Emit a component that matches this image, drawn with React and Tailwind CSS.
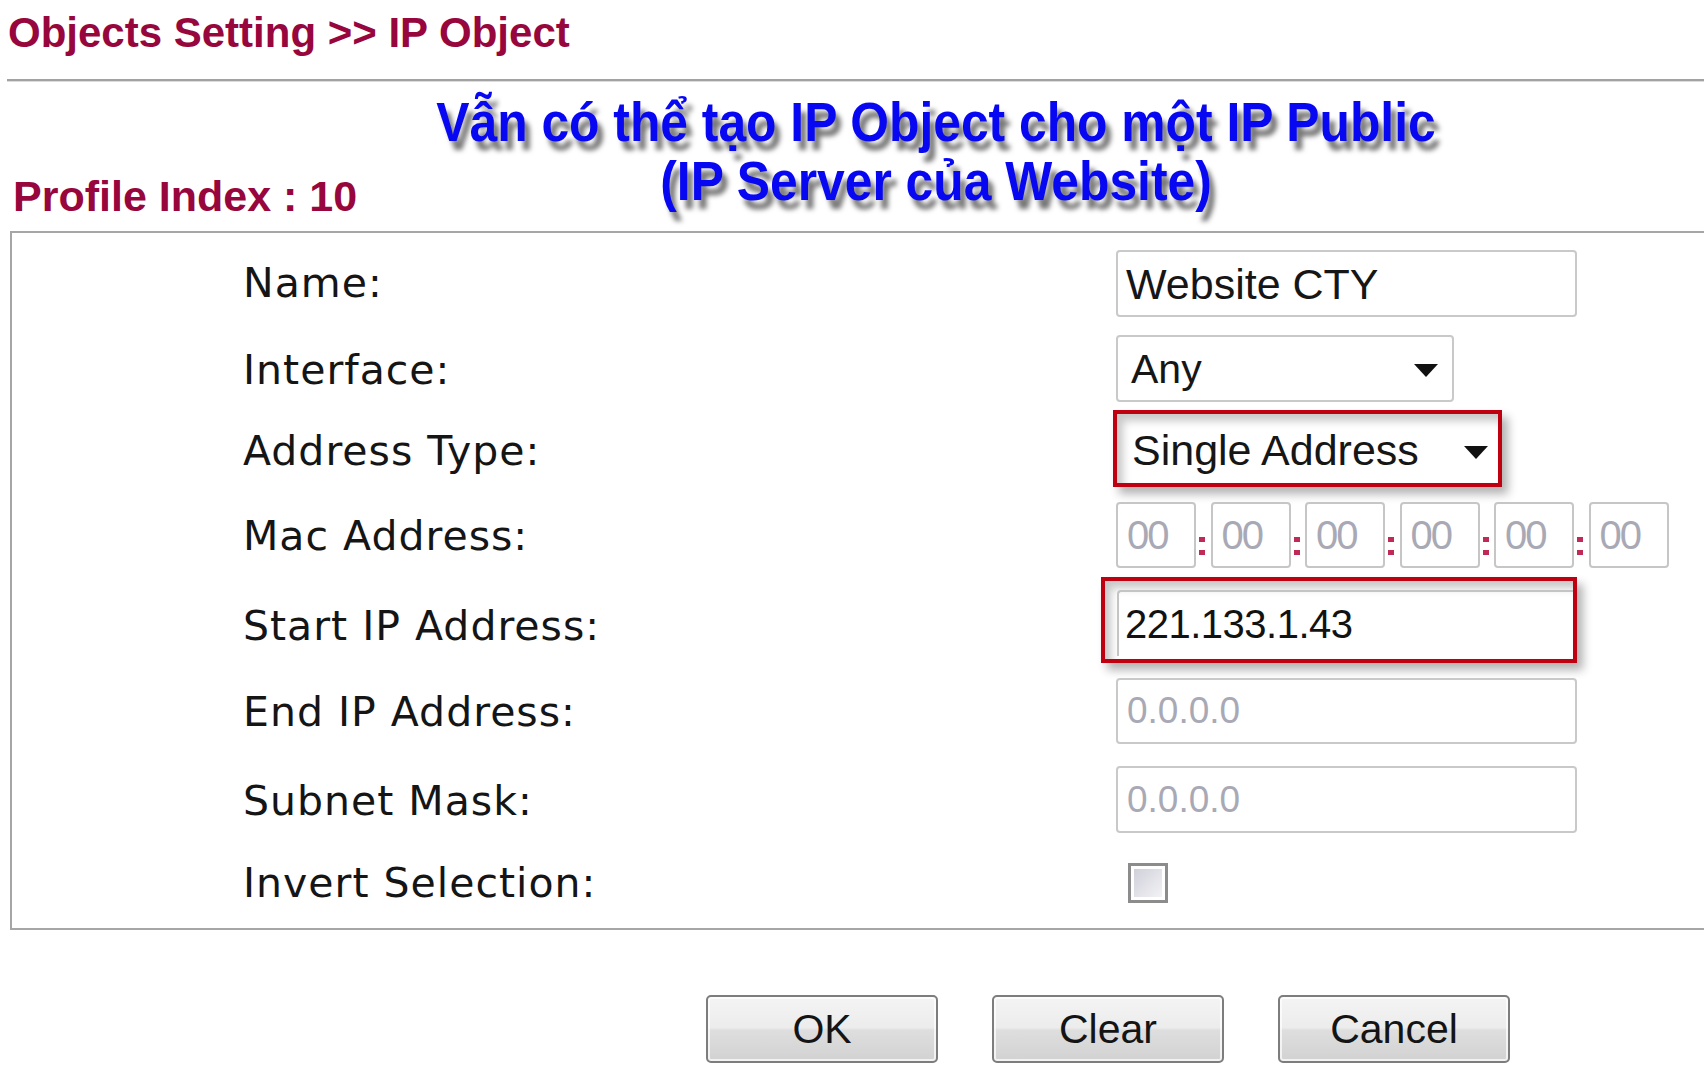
import React from "react";

const SANS = { fontFamily: '"Liberation Sans", Arial, sans-serif' };
const LABEL = { fontFamily: '"DejaVu Sans", Verdana, sans-serif' };

function Arrow() {
  return (
    <svg width="24" height="13" viewBox="0 0 24 13" className="block">
      <polygon points="0,0 24,0 12,13" fill="#111" />
    </svg>
  );
}

function Label({ children, pt = "pt-0" }) {
  return (
    <div
      className={`w-[1104px] pl-[231px] text-[41px] leading-[41px] tracking-[1px] text-[#151515] ${pt}`}
      style={LABEL}
    >
      {children}
    </div>
  );
}

function TextBox({ value, muted, w = "w-[461px]", h = "h-[67px]", pl = "pl-[9px]", size = "text-[40px]" }) {
  return (
    <div
      className={`${w} ${h} ${pl} ${size} flex items-center border-2 border-[#c9c9c9] rounded-[4px] bg-white leading-[40px] ${
        muted ? "text-[#a9a9b6]" : "text-[#161616]"
      }`}
      style={SANS}
    >
      {value}
    </div>
  );
}

function MacBox() {
  return (
    <div
      className="w-[80px] h-[66px] pl-[9px] flex items-center border-2 border-[#c6c6c6] rounded-[4px] bg-white text-[40px] leading-[40px] text-[#a9a9b6] tracking-[-2px]"
      style={SANS}
    >
      00
    </div>
  );
}

function Colon() {
  return (
    <div className="w-[14.5px] h-[66px] flex flex-col items-start pl-[3px] pt-[35px] gap-[8px]">
      <div className="w-[6px] h-[5px] bg-[#bf2a57]" />
      <div className="w-[6px] h-[5px] bg-[#bf2a57]" />
    </div>
  );
}

function Button({ children }) {
  return (
    <div
      className="w-[232px] h-[68px] flex items-center justify-center border-2 border-[#7d7d7d] rounded-[5px] bg-[linear-gradient(#f4f4f4,#ececec_48%,#dedede_52%,#d2d2d2)] text-[41px] leading-[41px] text-[#141414] shadow-[inset_0_0_0_2px_rgba(255,255,255,0.7)]"
      style={SANS}
    >
      {children}
    </div>
  );
}

export default function App() {
  return (
    <div className="w-[1704px] h-[1080px] bg-white overflow-hidden">
      {/* Title */}
      <div
        className="h-[79px] pt-[12px] pl-[8px] text-[42px] leading-[41px] font-bold text-[#97063c]"
        style={SANS}
      >
        Objects Setting &gt;&gt; IP Object
      </div>
      <div className="ml-[7px] h-[2px] bg-[#a2a2a2] border-b border-[#dcdcdc] box-content" />

      {/* Header area */}
      <div className="relative h-[149px]">
        <div
          className="pt-[93px] pl-[13px] text-[43px] leading-[42px] font-bold text-[#97063c]"
          style={SANS}
        >
          Profile Index : 10
        </div>
        <div
          className="absolute top-[11px] left-[336px] w-[1200px] text-center text-[55px] leading-[59px] font-bold text-[#0707f2] scale-x-[0.905] [text-shadow:6px_9px_6px_rgba(0,0,0,0.55)]"
          style={SANS}
        >
          <div>Vẫn có thể tạo IP Object cho một IP Public</div>
          <div>(IP Server của Website)</div>
        </div>
      </div>

      {/* Form box */}
      <div className="ml-[10px] border-t-2 border-l-2 border-b-2 border-[#a6a6a6] pt-[17px] pb-[25px] flex flex-col">
        {/* Name */}
        <div className="flex items-center h-[67px]">
          <Label>Name:</Label>
          <TextBox value="Website CTY" pl="pl-[8px]" size="text-[43px]" />
        </div>

        {/* Interface */}
        <div className="flex items-center h-[67px] mt-[18px]">
          <Label pt="pt-[3px]">Interface:</Label>
          <div
            className="w-[338px] h-[67px] pl-[13px] pr-[14px] flex items-center justify-between border-2 border-[#c9c9c9] rounded-[4px] bg-white text-[41px] leading-[40px] text-[#161616]"
            style={SANS}
          >
            <span>Any</span>
            <span className="pt-[4px]">
              <Arrow />
            </span>
          </div>
        </div>

        {/* Address Type */}
        <div className="flex items-center h-[77px] mt-[8px]">
          <Label pt="pt-[6px]">Address Type:</Label>
          <div
            className="-ml-[3px] w-[389px] h-[77px] pl-[15px] pr-[10px] flex items-center justify-between border-4 border-[#be0010] bg-white text-[43px] leading-[40px] text-[#161616] shadow-[6px_7px_9px_rgba(0,0,0,0.3),inset_6px_7px_9px_rgba(0,0,0,0.22)]"
            style={SANS}
          >
            <span className="pt-[2px]">Single Address</span>
            <span className="pt-[8px]">
              <Arrow />
            </span>
          </div>
        </div>

        {/* Mac */}
        <div className="flex items-center h-[66px] mt-[15px]">
          <Label pt="pt-[3px]">Mac Address:</Label>
          <div className="flex">
            <MacBox />
            <Colon />
            <MacBox />
            <Colon />
            <MacBox />
            <Colon />
            <MacBox />
            <Colon />
            <MacBox />
            <Colon />
            <MacBox />
          </div>
        </div>

        {/* Start IP */}
        <div className="flex items-center h-[86px] mt-[9px]">
          <Label pt="pt-[12px]">Start IP Address:</Label>
          <div className="-ml-[15px] w-[476px] h-[86px] border-4 border-[#be0010] bg-white overflow-hidden shadow-[6px_7px_9px_rgba(0,0,0,0.3),inset_6px_7px_9px_rgba(0,0,0,0.22)]">
            <div
              className="ml-[12px] mt-[9px] h-[66px] pl-[6px] flex items-center border-t-2 border-l-2 border-[#c4c4c4] rounded-tl-[4px] text-[40px] leading-[40px] text-[#121212] tracking-[-0.5px]"
              style={SANS}
            >
              221.133.1.43
            </div>
          </div>
        </div>

        {/* End IP */}
        <div className="flex items-center h-[66px] mt-[15px]">
          <Label pt="pt-[3px]">End IP Address:</Label>
          <TextBox value="0.0.0.0" muted h="h-[66px]" size="text-[37px]" />
        </div>

        {/* Subnet */}
        <div className="flex items-center h-[67px] mt-[22px]">
          <Label pt="pt-[3px]">Subnet Mask:</Label>
          <TextBox value="0.0.0.0" muted size="text-[37px]" />
        </div>

        {/* Invert */}
        <div className="flex items-center h-[40px] mt-[30px]">
          <Label>Invert Selection:</Label>
          <div className="ml-[12px] w-[40px] h-[40px] border-[3px] border-[#8c8c8c] p-[3px] bg-white">
            <div className="w-full h-full bg-[linear-gradient(135deg,#cfd0da,#f3f3f5)]" />
          </div>
        </div>
      </div>

      {/* Buttons */}
      <div className="mt-[65px] pl-[706px] flex gap-[54px]">
        <Button>OK</Button>
        <Button>Clear</Button>
        <Button>Cancel</Button>
      </div>
    </div>
  );
}
